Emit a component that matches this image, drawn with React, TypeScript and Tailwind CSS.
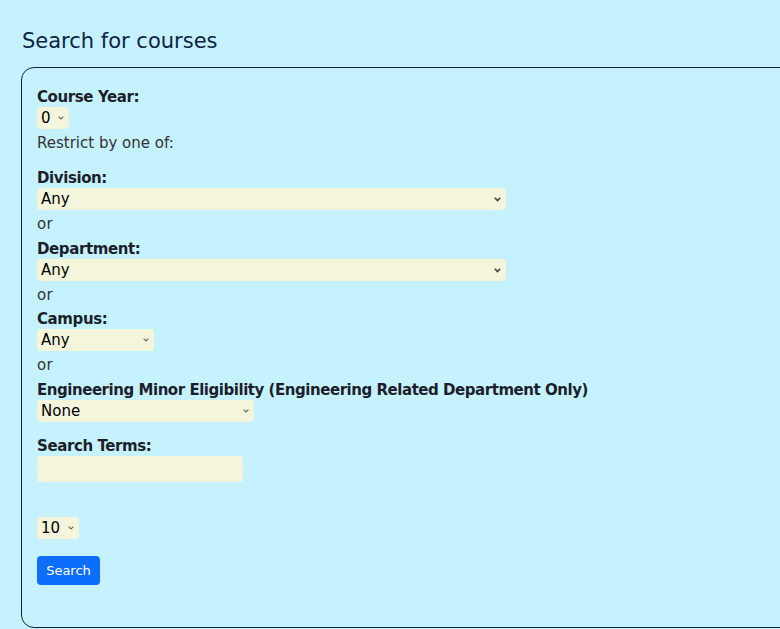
import React from 'react'

const font = "font-['DejaVu_Sans',Verdana,sans-serif]"

const Label = ({ children, tight }: { children: React.ReactNode; tight?: boolean }) => (
  <div
    className={`h-[22px] pt-[3px] text-[15px] leading-[18px] font-bold text-[#1c1f2a] ${tight ? 'tracking-[-0.46px]' : 'tracking-[-0.4px]'}`}
  >
    {children}
  </div>
)

const Or = ({ h }: { h: string }) => (
  <div className={`${h} pt-[5px] text-[15px] leading-[18px] tracking-[0.3px] text-[#333]`}>or</div>
)

const Select = ({ w, options, big }: { w: string; options: string[]; big?: boolean }) => (
  <div className={`relative ${w} h-[22px]`}>
    <select
      className={`block h-[22px] w-full appearance-none rounded-[4px] border-0 bg-[#f5f5dc] pl-[4px] text-[15px] text-black outline-none ${font}`}
    >
      {options.map((o) => (
        <option key={o}>{o}</option>
      ))}
    </select>
    {big ? (
      <svg className="pointer-events-none absolute right-[5px] top-[9px]" width="7" height="5" viewBox="0 0 7 5">
        <path d="M0.8 0.8 L3.5 3.6 L6.2 0.8" fill="none" stroke="#444" strokeWidth="1.6" />
      </svg>
    ) : (
      <svg className="pointer-events-none absolute right-[5px] top-[9px]" width="6" height="4" viewBox="0 0 6 4">
        <path d="M0.6 0.6 L3 3 L5.4 0.6" fill="none" stroke="#666" strokeWidth="1.1" />
      </svg>
    )}
  </div>
)

const App = () => {
  return (
    <div className={`h-[629px] w-[780px] overflow-hidden bg-[#c6f2ff] ${font}`}>
      <div className="pt-[27px] pl-[22px]">
        <h1 className="h-[28px] text-[21px] leading-[28px] font-normal text-[#0b2447]">Search for courses</h1>
      </div>
      <div className="mt-[12px] ml-[21px] w-[800px] h-[561px] rounded-[13px] border border-[#0b2447] pt-[17px] pl-[15px]">
        <Label>Course Year:</Label>
        <Select w="w-[32px]" options={['0', '1', '2', '3', '4']} />
        <div className="h-[37px] pt-[5px] text-[15px] leading-[18px] text-[#333]">Restrict by one of:</div>

        <Label>Division:</Label>
        <Select w="w-[469px]" options={['Any']} big />
        <Or h="h-[27px]" />

        <Label>Department:</Label>
        <Select w="w-[469px]" options={['Any']} big />
        <Or h="h-[26px]" />

        <Label>Campus:</Label>
        <Select w="w-[117px]" options={['Any']} />
        <Or h="h-[27px]" />

        <Label tight>Engineering Minor Eligibility (Engineering Related Department Only)</Label>
        <Select w="w-[217px]" options={['None']} />

        <div className="mt-[12px]">
          <Label>Search Terms:</Label>
        </div>
        <input
          type="text"
          className="block h-[26px] w-[206px] rounded-[4px] border-0 bg-[#f5f5dc] px-1 text-[15px] outline-none"
        />

        <div className="mt-[35px]">
          <Select w="w-[42px]" options={['10', '25', '50']} />
        </div>

        <button className="mt-[17px] block h-[29px] w-[63px] rounded-[4px] bg-[#0d6efd] text-[13px] text-white">
          Search
        </button>
      </div>
    </div>
  )
}

export default App
